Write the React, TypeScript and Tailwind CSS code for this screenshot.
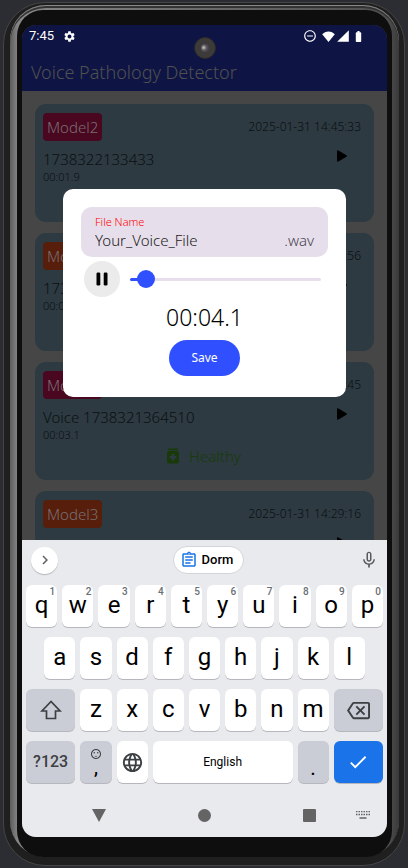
import React from "react";
import {
  MdBatteryFull,
  MdCheck,
  MdChevronRight,
  MdLanguage,
  MdMedication,
  MdMicNone,
  MdOutlineAssignment,
  MdOutlineBackspace,
  MdRemoveCircleOutline,
  MdSentimentSatisfied,
  MdSettings,
  MdSignalCellular4Bar,
} from "react-icons/md";

type Recording = {
  model: "Model2" | "Model3";
  date: string;
  title: string;
  duration: string;
};

const recordings: Recording[] = [
  { model: "Model2", date: "2025-01-31 14:45:33", title: "1738322133433", duration: "00:01.9" },
  { model: "Model3", date: "2025-01-31 14:40:56", title: "1738321856210", duration: "00:02.4" },
  { model: "Model2", date: "2025-01-31 14:32:45", title: "Voice 1738321364510", duration: "00:03.1" },
  { model: "Model3", date: "2025-01-31 14:29:16", title: "Voice 1738321156870", duration: "00:02.8" },
];

const badgeColor = {
  Model2: "bg-[#4a0720]",
  Model3: "bg-[#561e0b]",
};

function StatusBar() {
  return (
    <div className="flex h-[22px] items-center justify-between pl-[7px] pr-[22px] font-[Roboto,sans-serif] font-normal text-white">
      <div className="flex items-center gap-[9px]">
        <span className="text-[13px] leading-4">7:45</span>
        <MdSettings className="size-[13px]" />
      </div>
      <div className="flex items-center">
        <MdRemoveCircleOutline className="mr-[5px] size-[14px]" />
        <svg viewBox="0 0 13 11" className="mr-[1px] h-[11px] w-[13px]" fill="currentColor">
          <path d="M6.5 11 .2 3.3C1.800 1.500 4 .4 6.500 .4s4.700 1.100 6.300 2.900z" />
        </svg>
        <MdSignalCellular4Bar className="mr-[2px] size-[14px]" />
        <MdBatteryFull className="size-[13px]" />
      </div>
    </div>
  );
}

function RecordingCard({ model, date, title, duration }: Recording) {
  return (
    <li className="rounded-[11px] bg-[#2d3a41] pb-[14px] pl-2 pr-[13px] pt-[9px] text-[#0b0f11]">
      <div className="flex items-center justify-between">
        <span className={`flex h-7 items-center rounded-[4px] px-1 text-[15px] text-[#7b6e73] ${badgeColor[model]}`}>
          {model}
        </span>
        <time className="text-[12px]">{date}</time>
      </div>
      <div className="mt-2 flex items-start justify-between pr-[14px]">
        <div>
          <h2 className="text-[15px] font-light leading-5">{title}</h2>
          <p className="text-[11px] leading-4">{duration}</p>
        </div>
        <button type="button" aria-label={`Play ${title}`} className="pt-px text-black">
          <svg viewBox="0 0 10 12" className="h-3 w-[10px]" fill="currentColor">
            <path d="M0 1.200C0 .4.8 0 1.500.400L9.400 5.300c.6.400.6 1 0 1.400L1.500 11.600C.8 12 0 11.600 0 10.800z" />
          </svg>
        </button>
      </div>
      <p className="mt-[3px] flex items-center justify-center gap-[6px] text-[15px] leading-5 text-[#183a08]">
        <MdMedication className="size-5" />
        Healthy
      </p>
    </li>
  );
}

function SaveDialog() {
  return (
    <form
      role="dialog"
      aria-label="Save recording"
      className="flex w-full flex-col rounded-[10px] bg-white px-[18px] pb-[21px] pt-[18px]"
      onSubmit={(e) => e.preventDefault()}
    >
      <div className="flex h-[50px] flex-col justify-center rounded-[11px] bg-[#e6dfeb] px-[14px]">
        <label htmlFor="file-name" className="text-[11px] leading-4 text-[#ff0000]">
          File Name
        </label>
        <div className="flex items-center text-[15px] leading-5">
          <input
            id="file-name"
            defaultValue="Your_Voice_File"
            className="min-w-0 flex-1 bg-transparent text-[#1d1b20] outline-none"
          />
          <span className="text-[#49454f]">.wav</span>
        </div>
      </div>

      <div className="mt-1 flex items-center pl-[3px] pr-[7px]">
        <button
          type="button"
          aria-label="Pause"
          className="mr-[10px] flex size-9 shrink-0 items-center justify-center rounded-full bg-[#ebebeb]"
        >
          <svg viewBox="0 0 12 14" className="h-[14px] w-3" fill="black">
            <rect x="0.500" y="0.500" width="3.800" height="13" rx="1.300" />
            <rect x="7.700" y="0.500" width="3.800" height="13" rx="1.300" />
          </svg>
        </button>
        <input
          type="range"
          aria-label="Playback position"
          min={0}
          max={100}
          defaultValue={4}
          className="h-[18px] min-w-0 flex-1 appearance-none bg-transparent [&::-webkit-slider-runnable-track]:h-[3px] [&::-webkit-slider-runnable-track]:rounded-full [&::-webkit-slider-runnable-track]:bg-[linear-gradient(to_right,#304ffe_8%,#e6dfeb_8%)] [&::-webkit-slider-thumb]:mt-[-8px] [&::-webkit-slider-thumb]:size-[18px] [&::-webkit-slider-thumb]:appearance-none [&::-webkit-slider-thumb]:rounded-full [&::-webkit-slider-thumb]:bg-[#304ffe]"
        />
      </div>

      <output className="mt-[6px] text-center text-[23px] leading-7 text-black">00:04.1</output>
      <button type="submit" className="mt-[9px] h-9 self-center rounded-full bg-[#304ffe] px-[22px] text-[12px] font-normal text-white">
        Save
      </button>
    </form>
  );
}

function Key({ label, hint }: { label: string; hint?: string }) {
  return (
    <button
      type="button"
      className="relative col-span-2 flex h-[42px] items-center justify-center rounded-[6px] bg-white pb-[2px] text-[24px] leading-none text-black shadow-[0_1px_0_#b5b7bc]"
    >
      {label}
      {hint && (
        <span className="absolute right-[2px] top-[2px] text-[10px] font-medium leading-[10px] text-[#6b6e73]">{hint}</span>
      )}
    </button>
  );
}

const actionKey =
  "flex h-[42px] items-center justify-center rounded-[6px] bg-[#cbcdd6] text-[#3c4043] shadow-[0_1px_0_#b5b7bc]";

function Keyboard() {
  return (
    <section aria-label="Keyboard" className="shrink-0 bg-[#e8eaed] font-[Roboto,sans-serif] font-normal">
      <div className="flex h-[45px] items-center justify-between pb-[5px] pl-[9px] pr-2">
        <button
          type="button"
          aria-label="More tools"
          className="flex size-[27px] items-center justify-center rounded-full bg-white text-[#5f6368] shadow-[0_1px_1px_#b5b7bc]"
        >
          <MdChevronRight className="size-[18px]" />
        </button>
        <button
          type="button"
          className="flex h-7 items-center gap-1 rounded-full border border-[#d3d5d9] bg-white pl-[6px] pr-[10px] text-[13px] font-medium text-black"
        >
          <MdOutlineAssignment className="size-[18px] text-[#1a73e8]" />
          Dorm
        </button>
        <button type="button" aria-label="Voice typing" className="text-[#55585c]">
          <MdMicNone className="size-5" />
        </button>
      </div>

      <div className="grid grid-cols-20 gap-x-[5px] gap-y-[10px] px-1">
        {"qwertyuiop".split("").map((c, i) => (
          <Key key={c} label={c} hint={String((i + 1) % 10)} />
        ))}

        <span />
        {"asdfghjkl".split("").map((c) => (
          <Key key={c} label={c} />
        ))}
        <span />

        <button type="button" aria-label="Shift" className={`col-span-3 ${actionKey}`}>
          <svg viewBox="0 0 22 20" className="h-5 w-[22px]" fill="none" stroke="currentColor" strokeWidth="1.700">
            <path d="M11 1.500 2 11h4.500v7.500h9V11H20z" />
          </svg>
        </button>
        {"zxcvbnm".split("").map((c) => (
          <Key key={c} label={c} />
        ))}
        <button type="button" aria-label="Backspace" className={`col-span-3 ${actionKey}`}>
          <MdOutlineBackspace className="size-[23px]" />
        </button>

        <button type="button" className={`col-span-3 text-[16px] font-medium ${actionKey}`}>
          ?123
        </button>
        <button type="button" className={`col-span-2 flex-col text-[18px] font-medium leading-4 ${actionKey}`}>
          <MdSentimentSatisfied className="size-3" />
          <span className="text-black">,</span>
        </button>
        <button
          type="button"
          aria-label="Change language"
          className="col-span-2 flex h-[42px] items-center justify-center rounded-[6px] bg-white text-[#3c4043] shadow-[0_1px_0_#b5b7bc]"
        >
          <MdLanguage className="size-[23px]" />
        </button>
        <button
          type="button"
          className="col-span-8 flex h-[42px] items-center justify-center rounded-[6px] bg-white text-[12px] text-black shadow-[0_1px_0_#b5b7bc]"
        >
          English
        </button>
        <button type="button" className={`col-span-2 pt-3 text-[18px] font-medium ${actionKey}`}>
          <span className="text-black">.</span>
        </button>
        <button
          type="button"
          aria-label="Done"
          className="col-span-3 flex h-[42px] items-center justify-center rounded-[6px] bg-[#1a73e8] text-white shadow-[0_1px_0_#b5b7bc]"
        >
          <MdCheck className="size-[22px]" />
        </button>
      </div>

      <nav className="flex h-[54px] items-center pl-[70px] pr-[17px] pt-[10px] text-[#646464]">
        <div className="flex flex-1 items-center justify-between">
          <button type="button" aria-label="Back">
            <svg viewBox="0 0 14 13" className="h-[13px] w-[14px]" fill="currentColor">
              <path d="M0 0h14L7 13z" />
            </svg>
          </button>
          <button type="button" aria-label="Home" className="size-[13px] rounded-full bg-[#646464]" />
          <button type="button" aria-label="Recent apps" className="size-[13px] rounded-[1px] bg-[#646464]" />
        </div>
        <button type="button" aria-label="Switch keyboard" className="ml-10">
          <svg viewBox="0 0 14 8" className="h-2 w-[14px]" stroke="currentColor" fill="none">
            <path d="M0 .5h14M0 3.500h14" strokeWidth="1.300" strokeDasharray="1.500 1" />
            <path d="M3.500 7h7" strokeWidth="1.300" />
          </svg>
        </button>
      </nav>
    </section>
  );
}

export default function App() {
  return (
    <main className="h-screen overflow-hidden bg-[#2c2d32] px-[3px] pb-[2px] pt-[2px] font-['Noto_Sans',sans-serif] font-light">
      <div className="h-full rounded-[42px] border border-[#454545] bg-[#1f1f1f] pb-2 pl-[6px] pr-[5px] pt-[2px]">
        <div className="h-full rounded-[36px] bg-[linear-gradient(to_right,#5c5c5c,#868686_2%,#505050_97%,#3a3a3a)] px-[7px] pt-[5px] shadow-[inset_0_1px_0_#888888,inset_0_3px_0_#333333]">
          <div className="h-full rounded-[26px] bg-[#0e0e0e] px-[5px] pb-5 pt-[15px]">
            <div className="relative flex h-full flex-col overflow-hidden rounded-[14px] bg-[#464646]">
              <div className="relative min-h-0 flex-1 overflow-hidden">
                <header className="h-[66px] bg-[#0e1544]">
                  <StatusBar />
                  <h1 className="pl-[9px] pt-[13px] text-[18px] leading-6 text-[#505050]">Voice Pathology Detector</h1>
                </header>
                <ul className="flex flex-col gap-[11px] px-[13px] pt-[13px]">
                  {recordings.map((r) => (
                    <RecordingCard key={r.date} {...r} />
                  ))}
                </ul>
                <div className="absolute inset-x-0 bottom-0 top-[21px] flex items-center px-[41px]">
                  <SaveDialog />
                </div>
              </div>
              <Keyboard />
              <div className="absolute left-1/2 top-3 flex size-[22px] -translate-x-1/2 items-center justify-center rounded-full border border-[#2a2a2a] bg-[#3d3b3a]">
                <div className="size-2 rounded-full bg-[radial-gradient(circle_at_35%_45%,#d0c8c4,#5a565c_40%,#33333a)]" />
              </div>
            </div>
          </div>
        </div>
      </div>
    </main>
  );
}
